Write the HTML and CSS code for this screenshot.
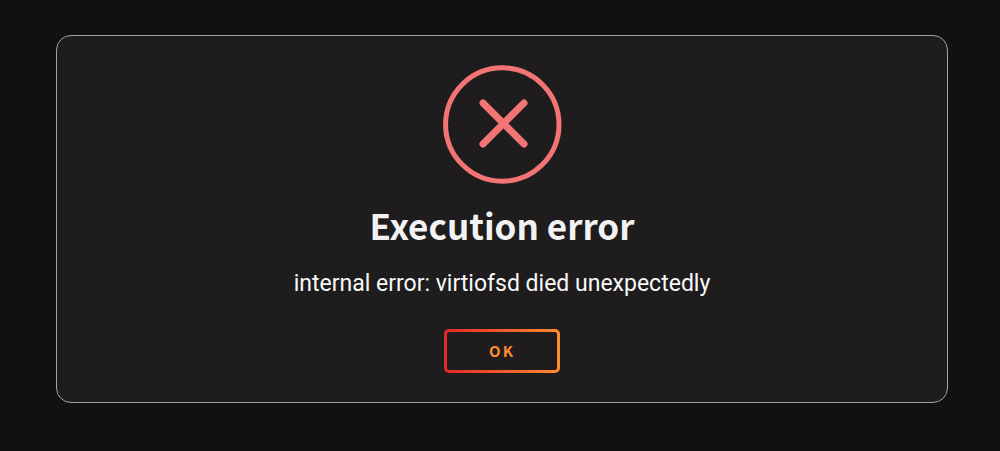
FILE: index.html
```html
<!DOCTYPE html>
<html lang="en">
<head>
<meta charset="utf-8">
<meta name="viewport" content="width=device-width, initial-scale=1">
<title>Execution error</title>
<link rel="stylesheet" href="styles.css">
</head>
<body>
<main class="alert" role="alertdialog" aria-labelledby="alert-title" aria-describedby="alert-text">
  <svg class="alert-icon" viewBox="0 0 120 120" aria-hidden="true">
    <circle cx="60.3" cy="59.5" r="56.7"/>
    <path d="M41 38 82 79M82 38 41 79"/>
  </svg>
  <h1 class="alert-title" id="alert-title">Execution error</h1>
  <p class="alert-text" id="alert-text">internal error: virtiofsd died unexpectedly</p>
  <button class="alert-confirm" type="button">OK</button>
</main>
</body>
</html>
```
FILE: styles.css
```css
* {
  box-sizing: border-box;
}

body {
  margin: 0;
  padding: 35px 52px 48px 56px;
  background: #111111;
  color: #f2f2f2;
  font-family: "Noto Sans CJK JP", "Noto Sans", sans-serif;
}

.alert {
  display: flex;
  flex-direction: column;
  align-items: center;
  padding: 29px 24px;
  border: 1px solid #a5a3a4;
  border-radius: 15px;
  background: #1e1c1d;
}

.alert-icon {
  width: 120px;
  height: 120px;
  fill: none;
  stroke: #f27474;
  stroke-width: 5;
  stroke-linecap: round;
}

.alert-icon path {
  stroke-width: 7;
}

.alert-title {
  margin: 18px 0 0;
  font-size: 35px;
  line-height: 44px;
  font-weight: 700;
}

.alert-text {
  margin: 21px 0 0;
  font-family: Roboto, sans-serif;
  font-size: 23px;
  line-height: 32px;
  color: #f8f8f8;
}

.alert-confirm {
  min-width: 116px;
  margin-top: 29px;
  padding: 10px 24px;
  border: 3px solid transparent;
  border-radius: 5px;
  background:
    linear-gradient(#1e1c1d, #1e1c1d) padding-box,
    linear-gradient(90deg, #e22828, #ff8c2f) border-box;
  color: #ff8c2f;
  font: 700 15px/18px "Noto Sans CJK JP", "Noto Sans", sans-serif;
  letter-spacing: 2px;
}
```
